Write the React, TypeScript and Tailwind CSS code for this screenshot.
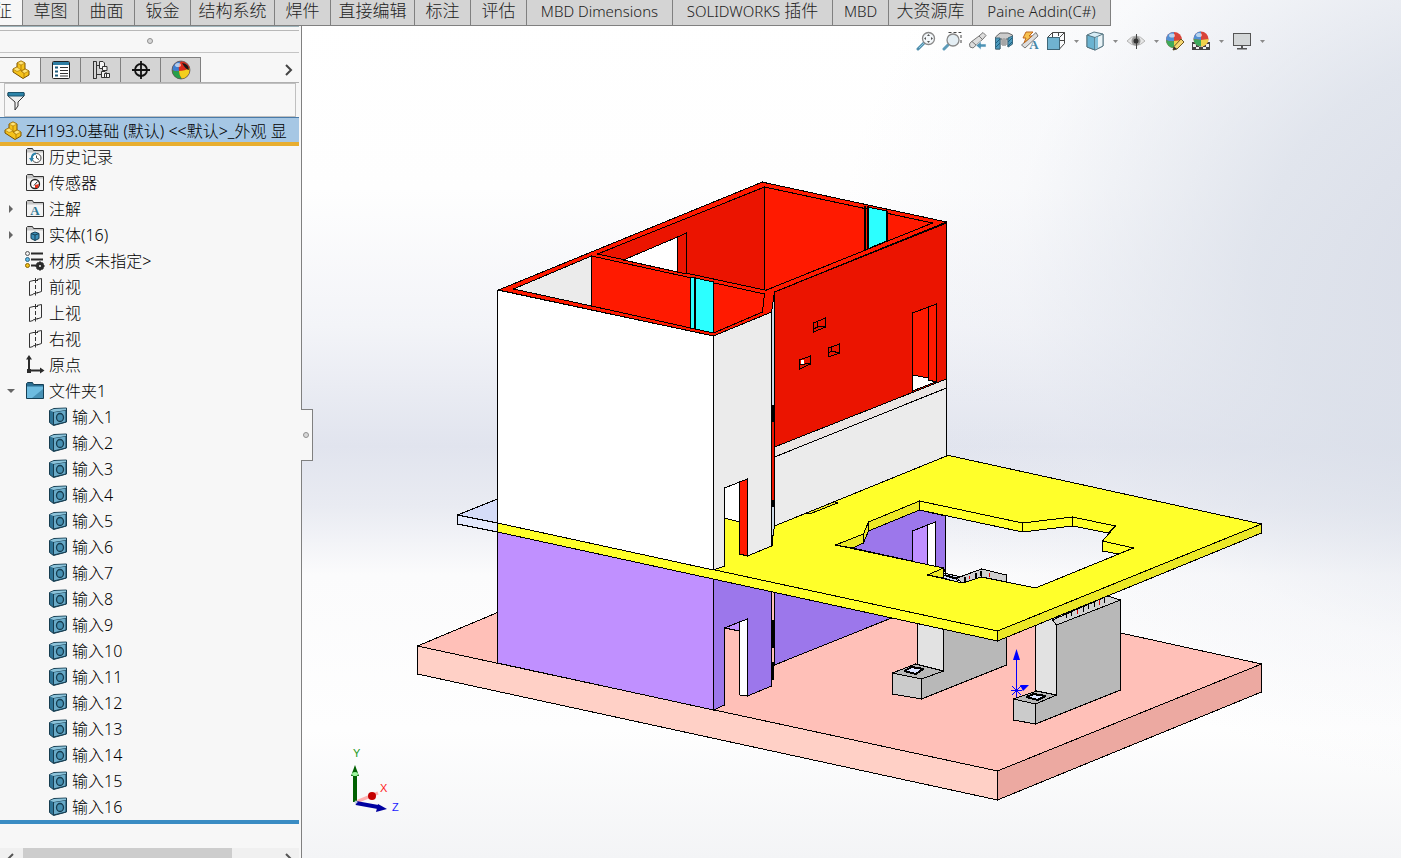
import { ReactNode } from 'react';

const UI_FONT = "font-['Noto_Sans','Noto_Sans_CJK_SC',sans-serif]";

const RIBBON_TABS = [
  { label: '特征', width: 'w-[23px] justify-end', active: true },
  { label: '草图', width: 'w-14' },
  { label: '曲面', width: 'w-14' },
  { label: '钣金', width: 'w-14' },
  { label: '结构系统', width: 'w-[84px]' },
  { label: '焊件', width: 'w-14' },
  { label: '直接编辑', width: 'w-[84px]' },
  { label: '标注', width: 'w-14' },
  { label: '评估', width: 'w-14' },
  { latin: 'MBD Dimensions', width: 'w-[146px]' },
  { latin: 'SOLIDWORKS', label: '插件', width: 'w-[160px]' },
  { latin: 'MBD', width: 'w-14' },
  { label: '大资源库', width: 'w-[84px]' },
  { latin: 'Paine Addin(C#)', width: 'w-[138px]' },
];

function PartIcon() {
  return (
    <svg width="20" height="20" viewBox="0 0 20 20" className="shrink-0">
      <path d="M2 9 L6 7 V3 L10 1 L14 3 V9 L18 11 V15 L12 18.500 L2 12 Z" fill="#f5c21b" stroke="#7a5200" strokeLinejoin="round" />
      <path d="M6 3 L10 1 L14 3 L10 5 Z M2 9 L6 7 L10 10 L6 11.500 Z M10 11 L14 9 L18 11 L13 13.500 Z" fill="#ffe477" stroke="#a87400" strokeWidth=".6" />
      <path d="M10 5 V10.500 L13 13.500 V17 M14 9 L10 11" fill="none" stroke="#a87400" strokeWidth=".8" />
    </svg>
  );
}

function PropertyIcon() {
  return (
    <svg width="20" height="20" viewBox="0 0 20 20">
      <rect x="1.500" y="1.500" width="17" height="17" rx="1" fill="#fff" stroke="#222" />
      <rect x="2" y="2" width="16" height="3" fill="#2d7da3" />
      <path d="M4 7.500 H7 M4 11.500 H7 M4 15.500 H7" stroke="#1c5b7c" strokeWidth="2" />
      <path d="M9 7.500 H17 M9 10.500 H17 M9 13.500 H17 M9 16 H17" stroke="#333" />
    </svg>
  );
}

function ConfigIcon() {
  return (
    <svg width="20" height="20" viewBox="0 0 20 20" fill="#f4f4f4" stroke="#333">
      <path d="M2.500 1.500 V18.500 M2 1.500 H5.500 M2 18.500 H5.500 M5.500 1.500 V18.500 M6 5.500 H9 M6 14.500 H10" fill="none" />
      <path d="M8.500 1.500 H12 L13.500 3 V8.500 H8.500 Z" />
      <path d="M11.500 6.500 H16 V10.500 H11.500 Z M10.500 11.500 H14 L15.500 13 V17.500 H10.500 Z M13.500 13.500 H18.500 V17.500 H13.500 Z" />
    </svg>
  );
}

function DimensionIcon() {
  return (
    <svg width="20" height="20" viewBox="0 0 20 20" fill="none" stroke="#111">
      <circle cx="10" cy="10" r="6" strokeWidth="1.800" />
      <path d="M10 1 V19 M1 10 H19" strokeWidth="1.800" />
    </svg>
  );
}

function BallIcon() {
  return (
    <svg width="20" height="20" viewBox="0 0 20 20">
      <circle cx="10" cy="10" r="9" fill="#d92b1c" />
      <path d="M1 10 A9 9 0 0 1 10 1 Q7 5 8 11 Q5 12 1 10" fill="#3f7fd0" />
      <path d="M1 10 Q5 12 8 11 Q8 15 11 19 A9 9 0 0 1 1 10" fill="#27a04a" />
      <path d="M8 11 Q14 11 18.500 8 A9 9 0 0 1 11 19 Q8 15 8 11" fill="#f3cf1d" />
      <path d="M11 3 Q18 4 18 10 Q15 10 11 3" fill="#181818" />
      <ellipse cx="7" cy="5" rx="3" ry="2" fill="#fff" opacity=".6" />
      <circle cx="10" cy="10" r="9" fill="none" stroke="#555" strokeWidth=".7" />
    </svg>
  );
}

function FolderIcon({ blue = false, children }: { blue?: boolean; children?: ReactNode }) {
  return (
    <svg width="20" height="20" viewBox="0 0 20 20" className="shrink-0">
      <path d="M1.500 17.500 V2.500 L2.500 1.500 H7.500 L8.500 3.500 H18.500 V17.500 Z" fill={blue ? '#2b6f92' : '#c6c6c6'} stroke={blue ? '#143f55' : '#333'} />
      <path d="M2 5.500 H18 V17 H2 Z" fill={blue ? '#6dbce0' : '#f3f3f3'} />
      {blue && <path d="M18 8 V17 H7 Z" fill="#4791b5" />}
      {children}
    </svg>
  );
}

const HistoryIcon = () => (
  <FolderIcon>
    <circle cx="11.500" cy="11" r="4.500" fill="#fff" stroke="#444" />
    <path d="M11.500 8.500 V11 L14 12.500" fill="none" stroke="#444" />
    <path d="M4 11 L6.500 15 L9 11 Z" fill="#2d83ab" />
    <path d="M6.500 12 Q7 6.500 11 6.500" fill="none" stroke="#2d83ab" strokeWidth="2" />
  </FolderIcon>
);

const SensorIcon = () => (
  <FolderIcon>
    <circle cx="10" cy="11" r="4.500" fill="#fff" stroke="#222" strokeWidth="1.300" />
    <path d="M9 12.500 L12.500 8.500" stroke="#222" />
    <path d="M10 12 L14 11 L13 15 L10 15 Z" fill="#e0311c" />
  </FolderIcon>
);

const AnnotationIcon = () => (
  <FolderIcon>
    <text x="10" y="16" textAnchor="middle" className="fill-[#2d7795] font-['Liberation_Serif',serif] text-[13px] font-bold">A</text>
  </FolderIcon>
);

const BodiesIcon = () => (
  <FolderIcon>
    <path d="M6 8.500 L10 7 L14 8.500 V13.500 L10 15.500 L6 13.500 Z" fill="#3d8fb8" stroke="#163f55" />
    <path d="M6 8.500 L10 10 L14 8.500 M10 10 V15.500" fill="none" stroke="#163f55" />
  </FolderIcon>
);

const MaterialIcon = () => (
  <svg width="20" height="20" viewBox="0 0 20 20" className="shrink-0">
    <path d="M6 2.500 H18 M6 8.500 H18 M6 14.500 H12" stroke="#2b2b2b" strokeWidth="2" />
    <circle cx="2.500" cy="2.500" r="2" fill="#eee" stroke="#555" />
    <circle cx="2.500" cy="8.500" r="2" fill="#5db8e4" stroke="#2c6683" />
    <circle cx="2.500" cy="14.500" r="2" fill="#f5c21b" stroke="#886500" />
    <circle cx="15" cy="15" r="2.500" fill="none" stroke="#2b2b2b" strokeWidth="3" />
    <path d="M15 10.500 V13 M15 17 V19.500 M10.500 15 H12 M18 15 H19.500 M12 12 L13 13 M17 13 L18 12 M12 18 L13 17 M17 17 L18 18" stroke="#2b2b2b" strokeWidth="2" />
  </svg>
);

const PlaneIcon = () => (
  <svg width="20" height="20" viewBox="0 0 20 20" className="shrink-0" fill="none" stroke="#333">
    <path d="M8.500 3.500 L4.500 4.500 V18.500 L8 17.500 M12 2.500 L16.500 1.500 V14.500 L12 16" />
    <path d="M10.500 1 V6 M10.500 8 V12 M10.500 14 V18.500 M8 3.500 H13 M8 17 L13 15.500" />
  </svg>
);

const OriginIcon = () => (
  <svg width="20" height="20" viewBox="0 0 20 20" className="shrink-0">
    <path d="M4 3 V15.500 H17" fill="none" stroke="#2b2b2b" strokeWidth="2" />
    <path d="M4 0 L7 4.500 H1 Z M19.500 15.500 L15 12.500 V18.500 Z M2 14 H6 V18 H2 Z" fill="#2b2b2b" />
  </svg>
);

const BodyIcon = () => (
  <svg width="20" height="20" viewBox="0 0 20 20" className="shrink-0">
    <path d="M1.500 3.500 L6 1.500 L18.500 1 V15 L5.500 18.500 L1.500 15.500 Z" fill="#2f7496" stroke="#173d50" />
    <path d="M5.500 5 L18 3 V15 L5.500 18 Z" fill="#69abc9" stroke="#173d50" />
    <path d="M2 3.500 L6 2 L18 1.500 V3 L5.500 5 Z" fill="#8cc3da" />
    <ellipse cx="12" cy="10.500" rx="3.500" ry="4" fill="#4690b2" stroke="#173d50" strokeWidth="1.300" />
  </svg>
);

const FEATURES = [
  { label: '历史记录', icon: <HistoryIcon /> },
  { label: '传感器', icon: <SensorIcon /> },
  { label: '注解', icon: <AnnotationIcon />, arrow: 'closed' },
  { label: '实体(16)', icon: <BodiesIcon />, arrow: 'closed' },
  { label: '材质 <未指定>', icon: <MaterialIcon /> },
  { label: '前视', icon: <PlaneIcon /> },
  { label: '上视', icon: <PlaneIcon /> },
  { label: '右视', icon: <PlaneIcon /> },
  { label: '原点', icon: <OriginIcon /> },
  { label: '文件夹1', icon: <FolderIcon blue />, arrow: 'open' },
];

const INPUTS = Array.from({ length: 16 }, (_, i) => `输入${i + 1}`);

const MANAGER_TABS = [
  { name: 'FeatureManager', icon: <PartIcon /> },
  { name: 'PropertyManager', icon: <PropertyIcon /> },
  { name: 'ConfigurationManager', icon: <ConfigIcon /> },
  { name: 'DimXpertManager', icon: <DimensionIcon /> },
  { name: 'DisplayManager', icon: <BallIcon /> },
];

function Ribbon() {
  return (
    <nav className="flex h-[26px] shrink-0">
      {RIBBON_TABS.map((tab) => (
        <button
          key={(tab.latin ?? '') + (tab.label ?? '')}
          className={`flex shrink-0 items-center justify-center gap-1 overflow-hidden whitespace-nowrap border-r border-b border-[#808080] pb-1 text-[17px] leading-5 text-[#222] ${tab.width} ${
            tab.active ? 'bg-[#f7f7f7] pr-2.5' : 'bg-[#d4d4d4]'
          }`}
        >
          {tab.latin && <span className="text-[15px]">{tab.latin}</span>}
          {tab.label && <span>{tab.label}</span>}
        </button>
      ))}
    </nav>
  );
}

function FeatureTree() {
  return (
    <ul className="-mt-0.5 text-base leading-[26px] text-black">
      {FEATURES.map((item) => (
        <li key={item.label} className="flex h-[26px] items-center">
          <span className="flex w-[25px] shrink-0 pl-[7px]">
            {item.arrow === 'closed' && (
              <svg width="8" height="8" viewBox="0 0 8 8"><path d="M2 0 L6 4 L2 8 Z" fill="#666" /></svg>
            )}
            {item.arrow === 'open' && (
              <svg width="8" height="8" viewBox="0 0 8 8"><path d="M0 2 H8 L4 6 Z" fill="#666" /></svg>
            )}
          </span>
          {item.icon}
          <span className="ml-1 whitespace-nowrap">{item.label}</span>
        </li>
      ))}
      {INPUTS.map((name) => (
        <li key={name} className="flex h-[26px] items-center pl-12">
          <BodyIcon />
          <span className="ml-1 whitespace-nowrap">{name}</span>
        </li>
      ))}
    </ul>
  );
}

function Sidebar() {
  return (
    <aside className="flex w-[302px] shrink-0 flex-col border-r border-[#808080] bg-[#f7f7f7] pr-0.5">
      <div className="h-[5px] shrink-0 border-t border-b border-t-[#9fb4bb] border-b-[#b8b8b8]" />
      <div className="flex h-[22px] shrink-0 items-center justify-center border-b border-[#c4c4c4] pb-0.5">
        <span className="size-1.5 rounded-full border border-[#909090] bg-[#d8d8d8]" />
      </div>
      <div className="mt-1 flex h-[26px] shrink-0 border-b border-[#b0b0b0]">
        {MANAGER_TABS.map((tab, i) => (
          <button
            key={tab.name}
            aria-label={tab.name}
            className={`flex items-center justify-center border-t border-r border-[#808080] ${i === 0 ? 'w-[41px] bg-[#f7f7f7] pl-0.5' : 'w-10 bg-[#d4d4d4]'}`}
          >
            {tab.icon}
          </button>
        ))}
        <button aria-label="More tabs" className="mr-1.5 ml-auto">
          <svg width="9" height="12" viewBox="0 0 9 12" fill="none" stroke="#444" strokeWidth="2"><path d="M2 1 L7 6 L2 11" /></svg>
        </button>
      </div>
      <label className="mr-[3px] ml-1 flex h-[34px] shrink-0 items-center border border-[#c0c0c0] pt-0.5 pl-0.5">
        <svg width="18" height="20" viewBox="0 0 18 20" className="shrink-0">
          <path d="M1 2 H17 V5 L11 11 V15 L8 19 V11 L1 5 Z" fill="#eee" stroke="#333" />
          <path d="M1 1.500 H17 V5 H1 Z" fill="#2c84a9" stroke="#1b536c" />
        </svg>
        <input aria-label="Filter" className="w-full bg-transparent outline-none" />
      </label>
      <div className="flex h-[29px] shrink-0 items-center overflow-hidden border-t border-b-4 border-t-[#4a7ba8] border-b-[#e8ae30] bg-[#a6c7e4] pt-0.5 pl-[3px] whitespace-nowrap">
        <PartIcon />
        <span className="ml-[3px] text-base leading-6">ZH193.0基础 (默认) &lt;&lt;默认&gt;_外观 显</span>
      </div>
      <FeatureTree />
      <div className="mb-6 h-1 shrink-0 bg-[#3a8cc3]" />
      <div className="flex min-h-0 flex-1 overflow-hidden bg-[#f0f0f0]">
        <svg width="23" height="17" viewBox="0 0 23 17" className="shrink-0" fill="none" stroke="#555" strokeWidth="2"><path d="M13 6 L8 11 L13 16" /></svg>
        <div className="h-full w-[209px] bg-[#cdcdcd]" />
        <svg width="23" height="17" viewBox="0 0 23 17" className="ml-auto shrink-0" fill="none" stroke="#555" strokeWidth="2"><path d="M10 6 L15 11 L10 16" /></svg>
      </div>
    </aside>
  );
}

const Caret = () => (
  <svg width="5" height="3" viewBox="0 0 5 3"><path d="M0 0 H5 L2.500 3 Z" fill="#8a8a8a" /></svg>
);

const ViewIcon = ({ children }: { children: ReactNode }) => (
  <svg width="20" height="20" viewBox="0 0 20 20" className="shrink-0">{children}</svg>
);

function ViewToolbar() {
  return (
    <div className="absolute top-[5px] right-[136px] flex items-center gap-1.5">
      <button aria-label="Zoom to fit">
        <ViewIcon>
          <path d="M2 18 L8 12" stroke="#4f8ead" strokeWidth="3" strokeLinecap="round" />
          <path d="M3 17 L8 12" stroke="#91c6dc" />
          <circle cx="12.500" cy="7.500" r="6" fill="#f3f7fa" stroke="#888" strokeWidth="1.300" />
          <path d="M12.500 3 L14 5 H11 Z M12.500 12 L14 10 H11 Z M8 7.500 L10 6 V9 Z M17 7.500 L15 6 V9 Z" fill="#555" />
        </ViewIcon>
      </button>
      <button aria-label="Zoom to area">
        <ViewIcon>
          <path d="M6.500 1.500 H19 V13" fill="none" stroke="#444" strokeDasharray="3 2" />
          <path d="M2 18 L6 14" stroke="#5d9cba" strokeWidth="3" strokeLinecap="round" />
          <circle cx="11" cy="9" r="6" fill="#e4eef4" stroke="#888" strokeWidth="1.300" />
        </ViewIcon>
      </button>
      <button aria-label="Previous view">
        <ViewIcon>
          <path d="M1.500 13 L3 11 L11 5 L15 1.500 L18 4.500 L15 8 L5 17 L2 16 Z" fill="#ddd" stroke="#777" />
          <path d="M11 5 L14.500 8.500 M4 10.500 L8 14" stroke="#777" />
          <path d="M8 14.500 L13 10.500 V13 H18 V16 H13 V18.500 Z" fill="#4d93b5" stroke="#f3f6f8" strokeWidth=".5" />
        </ViewIcon>
      </button>
      <button aria-label="Section view">
        <ViewIcon>
          <path d="M1.500 6 L6 2 H14 L18.500 4 V13 L14 16 V8 H12 V14 H8 V8 H6 V18 H1.500 Z" fill="#ccc" stroke="#666" />
          <path d="M1.500 7 H6 V18 H1.500 Z M14 7 L18.500 5 V13 L14 16 Z" fill="#4c9abd" stroke="#3c6a80" />
          <path d="M8 8 Q10 6 12 8 V14 H8 Z" fill="#a6a6a6" />
          <path d="M2 12 L6 8 M2 16 L6 12 M14 11 L18 7 M14 15 L18 11" stroke="#1f5f80" />
        </ViewIcon>
      </button>
      <button aria-label="Dynamic annotation views">
        <ViewIcon>
          <path d="M1.500 14 L11 6 L16 1.500 L18 5 L5 17 Z" fill="#ddd" stroke="#777" />
          <path d="M6 1 H13 L9 5 H12 L4 12 L6 7 H3 Z" fill="#f7c250" stroke="#bd651e" />
          <text x="14" y="18" textAnchor="middle" className="fill-[#4585a6] font-['Liberation_Serif',serif] text-[13px] font-bold">A</text>
        </ViewIcon>
      </button>
      <button aria-label="View orientation" className="flex items-center gap-2">
        <ViewIcon>
          <path d="M1.500 6.500 L6.500 1.500 H18.500 V12.500 L13.500 18 M6.500 1.500 V6 M13.500 6.500 L18.500 1.500 M12.500 1 V5 M14 9.500 H19" fill="none" stroke="#444" />
          <rect x="1.500" y="6.500" width="12" height="12" fill="#70b3d0" stroke="#3f6778" />
        </ViewIcon>
        <Caret />
      </button>
      <button aria-label="Display style" className="flex items-center gap-2">
        <ViewIcon>
          <path d="M2 4 L9 1 L18 3 V15 L10 19 L2 16 Z" fill="#d7edf6" stroke="#557481" />
          <path d="M2 4 L10 6.500 V19 L2 16 Z" fill="#6ab3d1" stroke="#557481" />
          <path d="M10 6.500 L18 3 V15 L10 19 Z" fill="#e9f3f7" stroke="#557481" />
          <path d="M10 7 L13 5.500 V17 L10 18.500 Z" fill="#83c0d9" />
        </ViewIcon>
        <Caret />
      </button>
      <button aria-label="Hide/show items" className="ml-0.5 flex items-center gap-2">
        <ViewIcon>
          <path d="M1 10 Q10 0 19 10 Q10 19 1 10 Z" fill="#e6e6e6" stroke="#b5b5b5" />
          <circle cx="10" cy="10" r="4.500" fill="#999" />
          <path d="M10.500 3 V18" stroke="#444" />
          <circle cx="10" cy="10" r="2.500" fill="#333" />
        </ViewIcon>
        <Caret />
      </button>
      <button aria-label="Edit appearance" className="relative">
        <ViewIcon>
          <circle cx="9" cy="9" r="8" fill="#d8443a" />
          <path d="M1 9 A8 8 0 0 1 9 1 L9 10 Q5 11 1 9" fill="#5391d4" />
          <path d="M1 9 Q5 11 9 10 V17 A8 8 0 0 1 1 9" fill="#3eaa5c" />
          <path d="M9 10 Q14 10 17 8 A8 8 0 0 1 9 17 Z" fill="#efd14a" />
          <ellipse cx="7" cy="4.500" rx="3" ry="2" fill="#fff" opacity=".6" />
          <path d="M8 19 L9 15.500 L16 8 L19 11 L12 18 Z" fill="#f5d673" stroke="#6d5520" />
          <path d="M8 19 L9 15.500 L12 18 Z" fill="#333" />
        </ViewIcon>
      </button>
      <button aria-label="Apply scene" className="flex items-center gap-2">
        <ViewIcon>
          <path d="M1 11 H19 V19 H1 Z" fill="#444" />
          <path d="M2 13 H5 V16 H2 Z M5 16 H8 V18 H5 Z M8 14 H12 V16 H8 Z M12 16 H15 V18 H12 Z M15 13 H18 V16 H15 Z" fill="#eee" />
          <circle cx="10" cy="8" r="7.500" fill="#d8443a" />
          <path d="M2.500 8 A7.500 7.500 0 0 1 10 .5 V9 Z" fill="#5391d4" />
          <path d="M2.500 8 L10 9 V15.500 A7.500 7.500 0 0 1 2.500 8" fill="#3eaa5c" />
          <path d="M10 9 L17.500 8 A7.500 7.500 0 0 1 10 15.500 Z" fill="#efd14a" />
          <ellipse cx="8" cy="4" rx="3" ry="2" fill="#fff" opacity=".6" />
        </ViewIcon>
        <Caret />
      </button>
      <button aria-label="View settings" className="ml-0.5 flex items-center gap-2">
        <ViewIcon>
          <rect x="1.500" y="2.500" width="17" height="12" fill="#d4d7d8" stroke="#555" />
          <path d="M9 15 H11 V17 H15 V18.500 H5 V17 H9 Z" fill="#555" />
        </ViewIcon>
        <Caret />
      </button>
    </div>
  );
}

const HOLE =
  'M836 545 L864 534 L869 522 L920 501 L1023 523 L1073 517 L1116 526 L1103 541 L1134 548 L1036 588 L982 577 L963 583 L928 575 L944 568 Z';

function BaseAndPillars() {
  return (
    <g>
      <path d="M418 646 L681 536 L1262 664 L998 771 Z" fill="#ffc0b8" />
      <path d="M418 646 L998 771 V800 L418 674 Z" fill="#ffd0c6" />
      <path d="M998 771 L1262 664 V692 L998 800 Z" fill="#eca9a1" />

      {/* ground floor walls */}
      <path d="M498 526 L714 573 V710 L498 663 Z" fill="#c090ff" />
      <path d="M775 580 L892 618 L775 665 Z" fill="#9c77eb" />
      <path d="M714 573 L772 585 V686 L748 696 V619 L725 628 V705 L714 710 Z" fill="#9c77eb" />
      <path d="M725 628 L740 622 V631 Z" fill="#c090ff" />
      <path d="M740 622 L748 619 V696 L740 695 Z" fill="#fff" />
      <path d="M773 620 V648 M773 662 V680" strokeWidth="2" />
      <path d="M853 548 L869 531 L920 510 L946 516 V573 L944 568 Z" fill="#9c77eb" />
      <path d="M913 531 L928 525 V566 L913 562 Z" fill="#c090ff" />
      <path d="M928 525 L936 522 V568 L928 566 Z" fill="#fff" />

      {/* rear pillar */}
      <path d="M918 600 H944 V671 L918 665 Z" fill="#e2e2e2" />
      <path d="M944 600 L1007 590 V665 L922 699 V679 L944 671 Z" fill="#b8b8b8" />
      <path d="M893 673 L916 664 L944 671 L922 679 Z" fill="#b8b8b8" />
      <path d="M893 673 L922 679 V699 L893 694 Z" fill="#cbcbcb" />
      <path d="M905 671 L912 667 L924 669 L916 674 Z" fill="#d9e2ff" strokeWidth="2" />
      <path d="M944 573 L962 577 L957 582 L944 578 Z" fill="#d3dbf7" />
      <path d="M957 578 L963 576 L982 569 L1007 575 V582 L982 577 L963 583 Z" fill="#cfcfcf" />
      <path d="M945 575 L958 579 M965 577 V582 M976 573 V578 M981 571 V576" strokeWidth="2" />
      <path d="M970 576 V579 M990 573 V577" stroke="#e00000" />

      {/* front pillar */}
      <path d="M1036 615 H1057 V695 L1036 691 Z" fill="#e2e2e2" />
      <path d="M1053 620 L1108 596 L1121 600 L1057 625 Z" fill="#d0d0d0" />
      <path d="M1057 625 L1121 600 V690 L1036 724 V704 L1057 695 Z" fill="#b8b8b8" />
      <path d="M1067 613 V618 M1072 611 V616 M1084 607 V612 M1089 604 V609 M1095 602 V607 M1105 598 V603" />
      <path d="M1078 610 V614 M1100 600 V605" stroke="#e00000" />
      <path d="M1014 699 L1037 691 L1057 695 L1036 704 Z" fill="#b8b8b8" />
      <path d="M1014 699 L1036 704 V724 L1014 720 Z" fill="#cbcbcb" />
      <path d="M1027 697 L1034 694 L1046 696 L1038 700 Z" fill="#d9e2ff" strokeWidth="2" />
    </g>
  );
}

function Slab() {
  return (
    <g>
      <path d="M458 515 L498 499 V523 Z" fill="#d5dcf8" />
      <path d="M458 515 L498 523 V532 L458 524 Z" fill="#e2e8fc" />
      <path d={`M498 523 L998 631 L1262 524 L947 455 L775 526 L700 500 Z ${HOLE}`} fill="#ffff2a" fillRule="evenodd" />
      <path d="M498 523 L998 631 V641 L498 532 Z" fill="#ffff2a" />
      <path d="M998 631 L1262 524 V533 L998 641 Z" fill="#ece826" />
      <path d="M836 545 L864 534 V543 L853 548 Z M864 534 L869 522 V531 L864 543 Z M869 522 L920 501 V510 L869 531 Z M928 575 L944 568 V578 Z" fill="#ece826" />
      <path d="M920 501 L1023 523 V532 L920 510 Z M1023 523 L1073 517 V526 L1023 532 Z M1073 517 L1116 526 L1109 533 L1073 526 Z M1103 541 L1134 548 L1119 554 L1103 551 Z" fill="#ffff2a" />
      <path d="M806 513 L834 501 L838 503 L810 514 Z" fill="#ece826" />
    </g>
  );
}

function UpperFloor() {
  return (
    <g>
      <path d="M725 488 L740 482 V522 L725 518 Z" fill="#fff" />
      {/* right wall and its parapet */}
      <path d="M775 457 L947 388 V456 L775 526 Z" fill="#ebebeb" />
      <path d="M775 447 L947 379 V388 L775 457 Z" fill="#eae5e3" />
      <path d="M775 292 L947 223 V379 L775 447 Z" fill="#eb1400" />
      <path d="M913 375 L929 378 L936 382 L913 391 Z" fill="#fff" />
      <path d="M913 313 L929 307 V378 L913 375 Z M929 307 L937 304 V382 L929 380 Z" fill="#ff1a00" />
      <path d="M814 323 L826 318 V327 L814 332 Z M818 322 V327 L814 329 M818 326 L826 327 M829 348 L840 344 V353 L829 357 Z M832 347 V351 L829 353 M832 351 L840 353 M800 360 L811 356 V364 L800 369 Z M800 365 L811 363" fill="none" />
      <path d="M801 360 H804 V364 H801 Z" fill="#fff" stroke="none" />
      {/* left block */}
      <path d="M772 312 L775 292 V526 L772 546 Z" fill="#ccd8e4" />
      <path d="M773 415 V505" stroke="#eb1400" strokeWidth="2" />
      <path d="M773 405 V422 M773 500 V507 M772 535 V546" strokeWidth="2" />
      <path d="M714 336 L772 312 V546 L748 556 V479 L725 488 V566 L714 570 Z" fill="#ebebeb" />
      <path d="M740 482 L748 479 V556 L740 554 Z" fill="#ff1a00" />
      <path d="M498 290 L714 336 V570 L498 523 Z" fill="#fff" />
      {/* wall tops */}
      <path d="M499 290 L763 182 L767 183 L947 222 L775 292 L772 312 L714 336 Z" fill="#ff1a00" />
      {/* back room */}
      <path d="M598 254 L765 187 V290 Z" fill="#eb1400" />
      <path d="M624 260 L678 237 V272 Z" fill="#fff" />
      <path d="M678 237 L687 233 V274 L678 272 Z" fill="#eb1400" />
      <path d="M765 187 L933 223 L767 290 H765 Z" fill="#ff1a00" />
      <path d="M868 207 L887 211 V241 L868 249 Z" fill="#2cffff" />
      <path d="M865 206 V250 M887 211 V241" strokeWidth="2" />
      <path d="M868 206 V249" strokeWidth="2" />
      {/* front room */}
      <path d="M514 289 L592 256 V306 Z" fill="#ebebeb" />
      <path d="M592 256 L765 294 L763 312 L714 333 L592 306 Z" fill="#ff1a00" />
      <path d="M691 277 L714 282 V333 L691 328 Z" fill="#2cffff" />
      <path d="M695 277 V329" strokeWidth="2" />
    </g>
  );
}

function ModelView() {
  return (
    <svg viewBox="302 26 1099 832" preserveAspectRatio="xMinYMin slice" className="size-full">
      <g stroke="#000" strokeWidth="1" strokeLinejoin="round" shapeRendering="crispEdges" transform="translate(-.5 0)">
        <BaseAndPillars />
        <Slab />
        <UpperFloor />
      </g>
      {/* origin marker */}
      <g stroke="#0000ff" fill="#0000ff">
        <path d="M1016.500 690 V658 M1011 690.500 H1022 M1012 686 L1021 695 M1021 686 L1012 695 M1016.500 684 V697" fill="none" />
        <path d="M1016.500 649 L1020 660 H1013 Z M1029 685 L1020 685 L1023 691 Z" stroke="none" />
      </g>
      {/* axis triad */}
      <path d="M356 802 L378 793" stroke="#ffb0b0" strokeWidth="3" />
      <circle cx="372" cy="796" r="4" fill="#c40000" />
      <path d="M355 802 V774" stroke="#006000" strokeWidth="4" />
      <path d="M355 765 L359 776 H351 Z" fill="#006000" />
      <ellipse cx="355" cy="774" rx="3" ry="2" fill="#9df79d" />
      <path d="M356 803 L378 807" stroke="#0000a0" strokeWidth="4" />
      <path d="M387 809 L376 812 L378 804 Z" fill="#0000a0" />
      <circle cx="356" cy="802" r="1.500" fill="#bcd" />
      <g className="font-['Liberation_Sans',sans-serif] text-[11px]">
        <text x="353" y="757" fill="#1a9a1a">Y</text>
        <text x="380" y="792" fill="#ff2020">X</text>
        <text x="392" y="811" fill="#2020ff">Z</text>
      </g>
    </svg>
  );
}

export default function App() {
  return (
    <div
      className={`flex h-screen flex-col overflow-hidden bg-[radial-gradient(ellipse_50%_62%_at_110%_30%,#d8dce7_0%,rgba(218,223,233,0.8)_40%,rgba(230,233,241,0.25)_75%,rgba(235,238,244,0)_100%),linear-gradient(to_bottom,#ffffff_0%,#fefefe_22%,#f3f4f8_38%,#e1e4ee_52%,#e9ebf2_59%,#fbfbfc_67%,#fefefe_85%,#f3f4f6_100%)] font-light ${UI_FONT}`}
    >
      <Ribbon />
      <div className="flex min-h-0 flex-1">
        <Sidebar />
        <main className="relative min-w-0 flex-1">
          <ModelView />
          <ViewToolbar />
          <button
            aria-label="Collapse panel"
            className="absolute top-[383px] -left-px flex h-[52px] w-3 items-center justify-center border border-l-0 border-[#808080] bg-[#f7f7f7] pr-0.5"
          >
            <span className="size-1.5 rounded-full border border-[#909090] bg-[#d8d8d8]" />
          </button>
        </main>
      </div>
    </div>
  );
}
